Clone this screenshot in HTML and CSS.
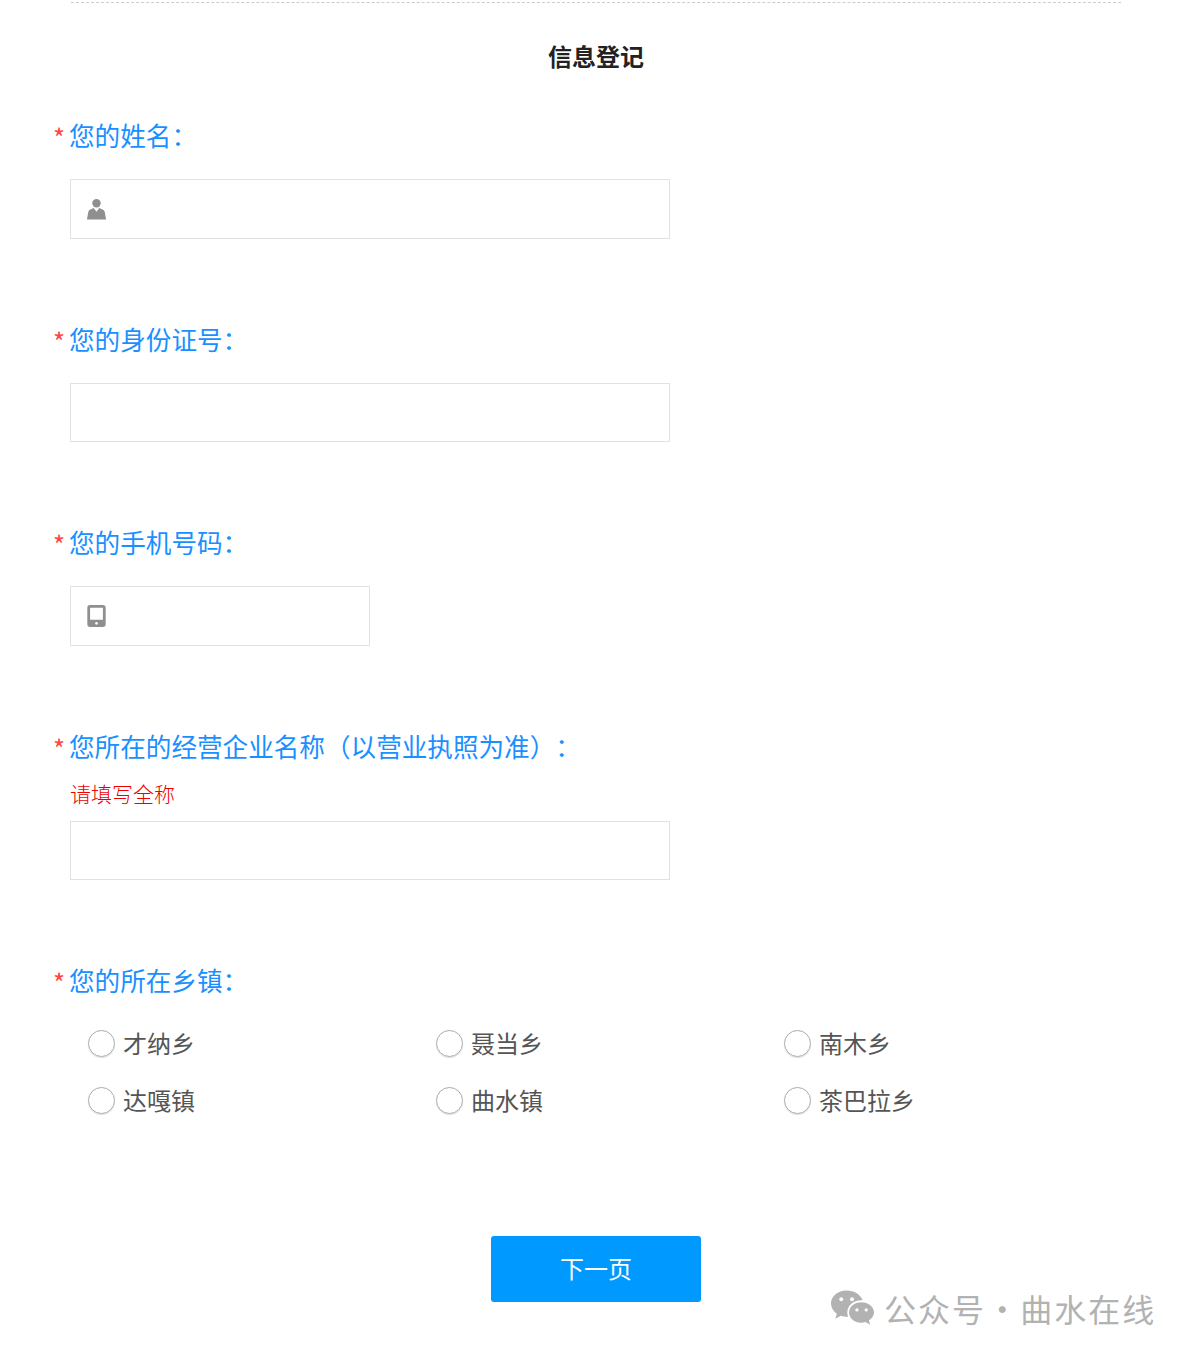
FILE: index.html
```html
<!DOCTYPE html>
<html lang="zh-CN">
<head>
<meta charset="utf-8">
<title>信息登记</title>
<link rel="stylesheet" href="styles.css">
</head>
<body>
<main class="page">
  <div class="rule"></div>
  <h1 class="title">信息登记</h1>
  <form class="form">
    <section class="field">
      <div class="label"><span class="star">*</span><span>您的姓名：</span></div>
      <div class="input input-full">
        <svg class="icon" viewBox="0 0 22 22"><circle cx="11" cy="5" r="4.4"/><path d="M1 22 L2.500 13.500 C3 12 6 11 8 10 L11 14 L14 10 C16 11 19 12 19.500 13.500 L21 22 Z"/></svg>
      </div>
    </section>
    <section class="field">
      <div class="label"><span class="star">*</span><span>您的身份证号：</span></div>
      <div class="input input-full"></div>
    </section>
    <section class="field">
      <div class="label"><span class="star">*</span><span>您的手机号码：</span></div>
      <div class="input input-half">
        <svg class="icon" viewBox="0 0 22 24"><path fill-rule="evenodd" d="M4 0 H18 A3 3 0 0 1 21 3 V21 A3 3 0 0 1 18 24 H4 A3 3 0 0 1 1 21 V3 A3 3 0 0 1 4 0 Z M4 3 V16 H18 V3 Z M11 18.5 A1.5 1.5 0 1 0 11 21.5 A1.5 1.5 0 1 0 11 18.5 Z"/></svg>
      </div>
    </section>
    <section class="field">
      <div class="label"><span class="star">*</span><span>您所在的经营企业名称（以营业执照为准）：</span></div>
      <p class="note">请填写全称</p>
      <div class="input input-full input-noted"></div>
    </section>
    <section class="field">
      <div class="label"><span class="star">*</span><span>您的所在乡镇：</span></div>
      <div class="radios">
        <div class="radio"><span class="dot"></span><span class="radio-text">才纳乡</span></div>
        <div class="radio"><span class="dot"></span><span class="radio-text">聂当乡</span></div>
        <div class="radio"><span class="dot"></span><span class="radio-text">南木乡</span></div>
        <div class="radio"><span class="dot"></span><span class="radio-text">达嘎镇</span></div>
        <div class="radio"><span class="dot"></span><span class="radio-text">曲水镇</span></div>
        <div class="radio"><span class="dot"></span><span class="radio-text">茶巴拉乡</span></div>
      </div>
    </section>
    <div class="actions"><div class="next">下一页</div></div>
  </form>
  <div class="mark">
    <svg class="mark-icon" viewBox="0 0 46 38"><path d="M17 1 C8 1 1 7 1 14.5 C1 19 3.5 22.5 7 25 L5.5 30 L11 27 C13 27.7 15 28 17 28 C17.5 28 18 28 18.500 27.900 C18 26.500 17.700 25 17.700 23.500 C17.700 16.500 24 11 32 11 C32.500 11 33 11 33.300 11.100 C31.500 5.200 24.800 1 17 1 Z"/><path d="M32 13 C24.800 13 19.500 17.700 19.500 23.500 C19.500 29.300 24.800 34 32 34 C33.500 34 35 33.800 36.300 33.300 L41 36 L39.800 31.500 C43 29.500 45 26.700 45 23.500 C45 17.700 39.200 13 32 13 Z"/><circle cx="11.500" cy="10" r="2" fill="#fff"/><circle cx="22.500" cy="10" r="2" fill="#fff"/><circle cx="27.500" cy="21" r="1.700" fill="#fff"/><circle cx="37" cy="21" r="1.700" fill="#fff"/></svg>
    <span class="mark-text">公众号 · 曲水在线</span>
  </div>
</main>
</body>
</html>
```
FILE: styles.css
```css
* { box-sizing: border-box; }
html, body { margin: 0; padding: 0; background: #fff; }
body { font-family: "Noto Sans CJK SC", "Noto Sans", sans-serif; text-spacing-trim: space-all; }
.page { position: relative; width: 1192px; height: 1357px; overflow: hidden; padding-top: 2px; }
.rule { margin: 0 71px; border-top: 1px dashed #ccc; }
.title { margin: 35px 0 0; font-size: 24px; line-height: 36px; font-weight: 700; color: #222; text-align: center; }
.form { padding: 41px 0 0 53px; }
.field { margin-bottom: 80px; }
.label { display: flex; align-items: center; height: 40px; font-size: 25.6px; line-height: 40px; font-weight: 400; color: #1890ff; }
.star { width: 16px; flex: none; font-size: 26px; color: #f44; line-height: 40px; padding-top: 4px; }
.input { margin: 24px 0 0 17px; height: 59.5px; border: 1px solid #e2e2e2; background: #fff; display: flex; align-items: center; padding-left: 14.5px; }
.input-full { width: 600px; }
.input-half { width: 300px; }
.input-noted { margin-top: 10px; }
.icon { width: 21px; height: 22px; fill: #8f8f8f; }
.note { margin: 12px 0 0 17px; height: 33px; font-size: 21px; line-height: 31px; font-weight: 300; color: #e00; }
.radios { display: grid; grid-template-columns: repeat(3, 348px); grid-auto-rows: 57px; margin: 15px 0 0 35px; }
.radio { display: flex; align-items: center; gap: 8px; font-size: 24px; color: #555; font-weight: 400; }
.radio-text { padding-bottom: 2px; }
.dot { width: 27px; height: 27px; border: 1px solid #aaa; border-radius: 50%; box-shadow: 0 1px 1px #ddd; flex: none; }
.actions { display: flex; justify-content: center; margin: 0 0 0 -53px; }
.field:last-of-type { margin-bottom: 107px; }
.next { width: 210px; height: 66px; border-radius: 3px; background: #0099ff; color: #fff; font-size: 24px; line-height: 64px; text-align: center; font-weight: 400; }
.mark { position: absolute; left: 830px; top: 1286px; display: flex; align-items: center; gap: 9px; color: #b2b2b2; }
.mark-icon { width: 45px; height: 38px; fill: #b2b2b2; }
.mark-text { font-size: 32px; line-height: 44px; letter-spacing: 2px; word-spacing: -9px; white-space: nowrap; }
```
